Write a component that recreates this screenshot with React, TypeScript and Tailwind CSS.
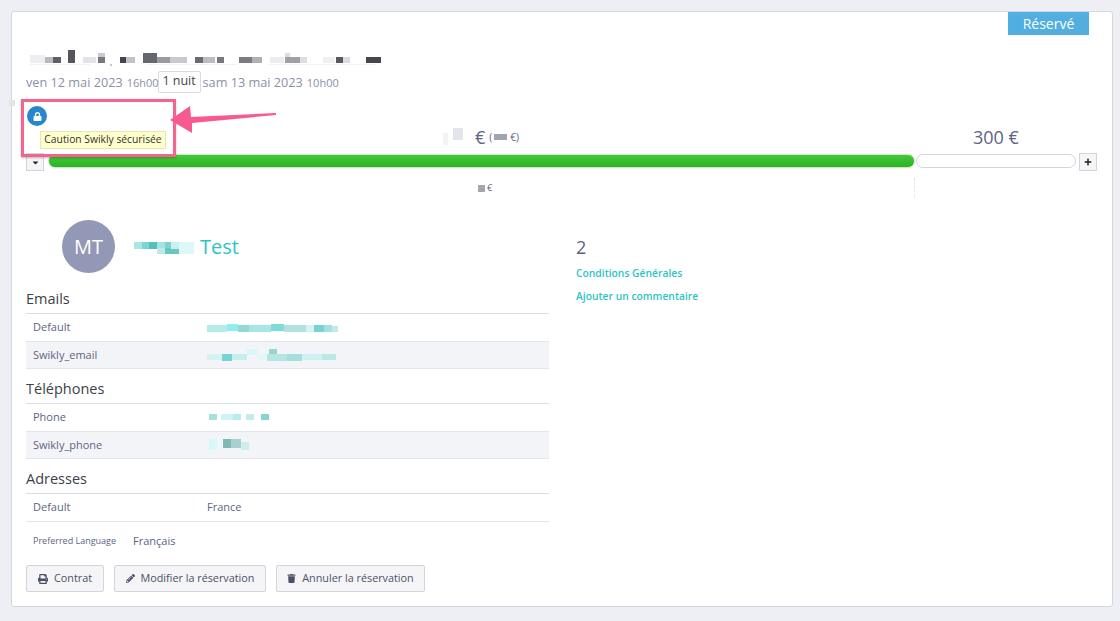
import { FaCaretDown, FaLock, FaPencilAlt, FaPlus, FaPrint, FaTrash } from 'react-icons/fa';

type Block = [number, number, number, number, string];

// pixelated areas of the screenshot: x, y, w, h, colour
const titleBlocks: Block[] = [
  [3, 5, 15, 8, '#eeeef1'], [18, 7, 8, 6, '#b9b9c0'], [26, 7, 8, 6, '#5f5f68'],
  [41, 0, 7, 13, '#55555e'], [56, 7, 13, 6, '#e3e3e7'], [71, 3, 7, 10, '#c9c9cf'], [71, 7, 7, 6, '#77777f'],
  [93, 7, 6, 6, '#44444c'], [99, 7, 9, 6, '#c2c2c8'], [116, 3, 14, 10, '#66666e'], [130, 7, 13, 6, '#9a9aa1'],
  [143, 7, 17, 6, '#c8c8ce'], [168, 7, 8, 6, '#6a6a72'], [176, 7, 12, 6, '#bcbcc2'], [190, 7, 7, 6, '#77777f'],
  [212, 7, 13, 6, '#7b7b83'], [225, 7, 10, 6, '#b0b0b7'], [243, 7, 14, 6, '#ececef'], [258, 3, 5, 10, '#dddde1'],
  [258, 7, 15, 6, '#9f9fa6'], [273, 7, 7, 6, '#dedee2'], [296, 7, 12, 6, '#f0f0f2'], [309, 7, 7, 6, '#58585f'],
  [316, 7, 7, 6, '#dcdce0'], [339, 7, 15, 6, '#46464e'], [83, 14, 2, 2, '#c8c8ce'], [3, 14, 60, 1, '#f2f2f5'],
  [120, 14, 90, 1, '#f2f2f5'], [240, 14, 110, 1, '#f4f4f6'],
];
const nameBlocks: Block[] = [
  [0, 4, 8, 7, '#a9e6e4'], [8, 4, 7, 7, '#7cd5d2'], [15, 4, 8, 7, '#55bfbb'], [23, 4, 8, 7, '#a6e2df'],
  [23, 10, 8, 6, '#bdeae7'], [31, 4, 6, 12, '#7fd2cf'], [31, 10, 14, 6, '#6cc7c4'], [37, 4, 8, 7, '#c7f0ee'], [45, 4, 15, 12, '#ddf8f7'],
];
const email1: Block[] = [
  [0, 3, 20, 7, '#b5ecea'], [20, 2, 11, 7, '#8eeeed'], [31, 3, 11, 7, '#93d8d5'], [42, 3, 22, 7, '#a8e6e3'],
  [64, 2, 13, 7, '#7ddcd9'], [77, 3, 22, 7, '#aee3e1'], [99, 3, 8, 7, '#d5f5f4'], [107, 3, 10, 7, '#78d3d0'], [117, 3, 8, 7, '#a5e0de'], [125, 4, 6, 6, '#bfeceb'],
];
const email2: Block[] = [
  [0, 5, 15, 6, '#d2f3f2'], [15, 5, 10, 7, '#79d3d0'], [25, 5, 15, 6, '#c5eeed'], [40, 0, 10, 6, '#d8f8f7'],
  [50, 5, 10, 6, '#e2f8f8'], [62, 0, 8, 5, '#9ad3cf'], [60, 5, 20, 7, '#b6e6e4'], [80, 5, 15, 7, '#a3dfdd'], [95, 5, 20, 6, '#d0f1ef'], [115, 5, 14, 6, '#b9e8e6'],
];
const phone1: Block[] = [
  [0, 0, 8, 6, '#a5e0dc'], [12, 0, 12, 6, '#cdf3f2'], [24, 0, 8, 6, '#b5eeec'], [37, 0, 8, 6, '#c2ebe9'], [52, 0, 8, 6, '#86d5d1'],
];
const phone2: Block[] = [
  [0, 0, 8, 11, '#d8f8f8'], [14, 0, 8, 9, '#7fb9b6'], [22, 0, 10, 9, '#a8d0ce'], [32, 3, 8, 8, '#cdeeed'],
];

function Pixels({ blocks, width, height, className }: { blocks: Block[]; width: number; height: number; className?: string }) {
  return (
    <svg width={width} height={height} className={className}>
      {blocks.map(([x, y, w, h, fill], i) => (
        <rect key={i} x={x} y={y} width={w} height={h} fill={fill} />
      ))}
    </svg>
  );
}

function Row({ label, striped, children }: { label: string; striped?: boolean; children: React.ReactNode }) {
  return (
    <div className={`flex items-center border-b border-[#e4e5ea] pl-[7px] text-[11px] text-[#5c6484] ${striped ? 'h-[27px] bg-[#f3f4f7]' : 'h-[28px]'}`}>
      <div className="w-[174px]">{label}</div>
      {children}
    </div>
  );
}

function Section({ title, children }: { title: string; children: React.ReactNode }) {
  return (
    <div>
      <h3 className="h-[34px] pt-[10px] text-[14.5px] leading-[20px] text-[#3c3f4a]">{title}</h3>
      <div className="border-t border-[#dddee3]">{children}</div>
    </div>
  );
}

function Btn({ icon, label, width }: { icon: React.ReactNode; label: string; width: string }) {
  return (
    <button className={`flex h-[27px] items-center justify-center gap-[6px] rounded-[2px] border border-[#d4d5da] bg-[#f5f5f7] text-[10.8px] text-[#4b5068] ${width}`}>
      {icon}
      {label}
    </button>
  );
}

export default function App() {
  return (
    <div className="h-[621px] w-[1120px] overflow-hidden bg-[#eeeff4] pt-[11px] pl-[11px] font-['Open_Sans',sans-serif]">
      <div className="relative h-[596px] w-[1102px] rounded-[3px] border border-[#d5d6de] bg-white px-[14px]">
        {/* status */}
        <div className="flex justify-end pr-[9px]">
          <div className="flex h-[23px] w-[81px] items-center justify-center bg-[#52aedf] text-[14px] font-medium text-white">Réservé</div>
        </div>

        {/* title and dates */}
        <Pixels blocks={titleBlocks} width={360} height={16} className="mt-[15px] ml-[1px] blur-[0.5px]" />
        <div className="mt-[6px] flex h-[22px] items-center whitespace-nowrap text-[#8a90a8]">
          <span className="text-[12.7px]">ven 12 mai 2023</span>
          <span className="ml-[4px] text-[11px]">16h00</span>
          <span className="-mt-[3px] -ml-[1px] flex h-[22px] w-[43px] items-center justify-center rounded-[2px] border border-[#d9dade] bg-white text-[12.5px] text-[#444]">1 nuit</span>
          <span className="ml-[2px] text-[12.7px]">sam 13 mai 2023</span>
          <span className="ml-[4px] text-[11px]">10h00</span>
        </div>

        {/* deposit */}
        <div className="mt-[12px] ml-[1px] flex h-[20px] w-[20px] items-center justify-center rounded-full bg-[#2a86ca]">
          <FaLock className="text-[9px] text-white" />
        </div>
        <div className="relative mt-[2px] h-[25px]">
          <div className="absolute left-[417px] -top-[3px] flex items-center text-[#5c6484]">
            <svg width="32" height="18" className="blur-[0.5px]">
              <rect x="0" y="5" width="5" height="12" fill="#f2f3f7" />
              <rect x="10" y="0" width="10" height="12" fill="#e3e5ee" />
            </svg>
            <span className="text-[18px] leading-[24px]">€</span>
            <span className="ml-[4px] flex items-center text-[10px]">
              (<span className="mr-[3px] ml-[2px] inline-block h-[6px] w-[13px] bg-[#a0a3b0]" />€)
            </span>
          </div>
          <div className="absolute left-[947px] -top-[3px] text-[18px] leading-[24px] text-[#5c6484]">300 €</div>
        </div>

        {/* progress */}
        <div className="flex h-[18px] items-start">
          <div className="flex h-[18px] w-[18px] items-center justify-center border border-[#d4d5da] bg-[#f5f5f7]">
            <FaCaretDown className="text-[9px] text-[#222]" />
          </div>
          <div className="mt-[1px] ml-[4px] h-[14px] w-[867px] rounded-full border border-[#cfe8cc] bg-gradient-to-b from-[#45c83a] to-[#27b41f]" />
          <div className="mt-[1px] ml-[1px] h-[14px] w-[160px] rounded-full border border-[#d4d5da] bg-white" />
          <div className="ml-[3px] flex h-[18px] w-[18px] items-center justify-center border border-[#d4d5da] bg-[#f5f5f7]">
            <FaPlus className="text-[8px] text-[#222]" />
          </div>
        </div>
        <div className="relative h-[29px]">
          <div className="absolute left-[452px] top-[12px] flex items-center text-[9px] leading-[10px] text-[#5c6484]">
            <span className="mr-[2px] inline-block h-[7px] w-[7px] bg-[#a4a6b2]" />€
          </div>
          <div className="absolute left-[888px] top-[7px] h-[20px] border-l border-dotted border-[#dcdde2]" />
        </div>

        {/* guest */}
        <div className="mt-[20px] grid grid-cols-[523px_1fr] gap-x-[27px]">
          <div>
            <div className="flex h-[53px] items-center pl-[36px]">
              <div className="flex h-[53px] w-[53px] items-center justify-center rounded-full bg-[#9298b5] text-[20px] text-white">MT</div>
              <Pixels blocks={nameBlocks} width={62} height={18} className="ml-[19px] blur-[0.5px]" />
              <span className="ml-[4px] pt-[1px] text-[20px] text-[#2cc5c5]">Test</span>
            </div>
            <div className="mt-[6px]">
              <Section title="Emails">
                <Row label="Default">
                  <Pixels blocks={email1} width={133} height={12} className="blur-[0.5px]" />
                </Row>
                <Row label="Swikly_email" striped>
                  <Pixels blocks={email2} width={130} height={12} className="blur-[0.5px]" />
                </Row>
              </Section>
              <Section title="Téléphones">
                <Row label="Phone">
                  <Pixels blocks={phone1} width={62} height={8} className="ml-[2px] blur-[0.5px]" />
                </Row>
                <Row label="Swikly_phone" striped>
                  <Pixels blocks={phone2} width={46} height={12} className="ml-[2px] blur-[0.5px]" />
                </Row>
              </Section>
              <Section title="Adresses">
                <Row label="Default">France</Row>
              </Section>
            </div>
            <div className="mt-[11px] flex h-[16px] items-center pl-[7px] text-[#5c6484]">
              <span className="w-[100px] text-[9px]">Preferred Language</span>
              <span className="text-[11px]">Français</span>
            </div>
            <div className="mt-[16px] flex gap-[10px]">
              <Btn icon={<FaPrint className="text-[10px]" />} label="Contrat" width="w-[78px]" />
              <Btn icon={<FaPencilAlt className="text-[9px]" />} label="Modifier la réservation" width="w-[152px]" />
              <Btn icon={<FaTrash className="text-[9px]" />} label="Annuler la réservation" width="w-[149px]" />
            </div>
          </div>
          <div className="pt-[15px]">
            <div className="text-[18px] leading-[24px] text-[#5c6484]">2</div>
            <div className="mt-[6px] text-[10.3px] font-semibold leading-[16px] text-[#2cc5c5]">Conditions Générales</div>
            <div className="mt-[7px] text-[10.3px] font-semibold leading-[16px] text-[#2cc5c5]">Ajouter un commentaire</div>
          </div>
        </div>

        {/* annotation over the page */}
        <div className="absolute -left-[3px] top-[88px] h-[6px] w-[6px] bg-[#e3e4ea]" />
        <div className="absolute left-[9px] top-[87px] h-[58px] w-[155px] border-[3px] border-[#f4648f] shadow-[0_1px_2px_rgba(0,0,0,0.25)]" />
        <div className="absolute left-[28px] top-[119px] flex h-[18px] w-[126px] items-center justify-center whitespace-nowrap border border-[#e6e6b8] bg-[#ffffcc] text-[10.3px] text-[#333]">
          Caution Swikly sécurisée
        </div>
        <svg className="absolute left-[157px] top-[94px]" width="110" height="36" viewBox="0 0 110 36">
          <path d="M1 14 L21 0 L22 11 L107 7 L107 9 L23 17 L23 27 Z" fill="#f8598f" />
        </svg>
      </div>
    </div>
  );
}
